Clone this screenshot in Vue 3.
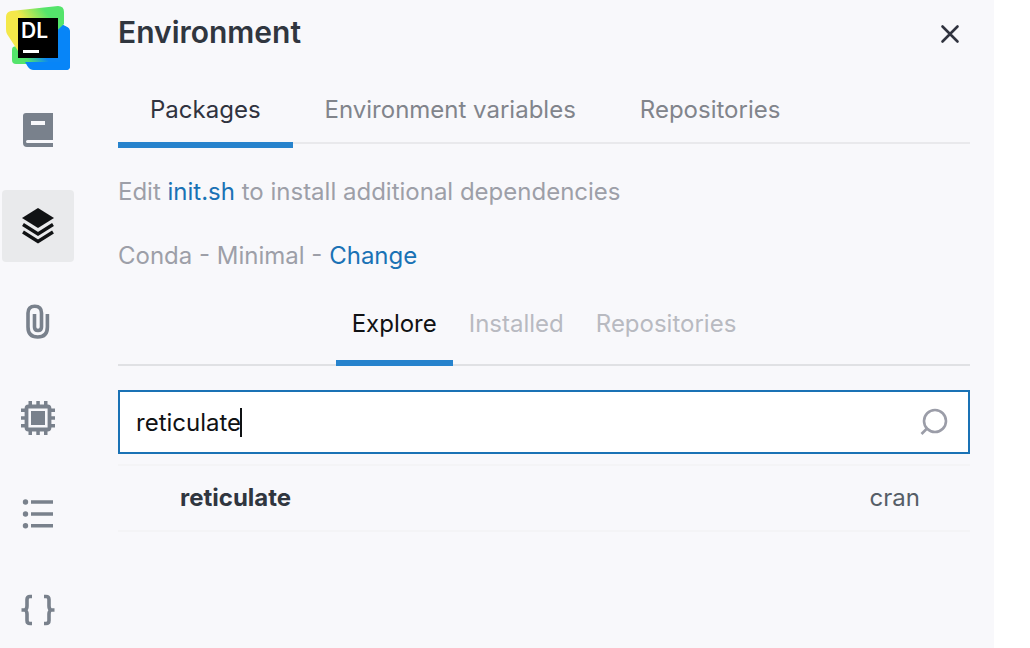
<script setup>
import { ref } from 'vue'

const query = ref('reticulate')
const tabs = ['Packages', 'Environment variables', 'Repositories']
const activeTab = ref('Packages')
const views = ['Explore', 'Installed', 'Repositories']
const activeView = ref('Explore')
const packages = [{ name: 'reticulate', source: 'cran' }]
</script>

<template>
  <div class="app">
    <nav class="sidebar" aria-label="Tools">
      <svg class="logo" viewBox="0 0 64 64" aria-hidden="true">
        <defs>
          <linearGradient id="logo-warm" x1="14" y1="34" x2="50" y2="8" gradientUnits="userSpaceOnUse">
            <stop offset="0.3" stop-color="#f4e84a" />
            <stop offset="0.85" stop-color="#54e46b" />
          </linearGradient>
          <linearGradient id="logo-cool" x1="12" y1="50" x2="34" y2="34" gradientUnits="userSpaceOnUse">
            <stop offset="0.2" stop-color="#4fe06f" />
            <stop offset="0.8" stop-color="#0a86f5" />
          </linearGradient>
        </defs>
        <path d="M10 40l-3 1q-1 1-1 3v10q0 4 4 4h16V38z" fill="#54e46b" />
        <path d="M52 18l9 3q3 1 3 5v34q0 4-4 4H28q-3 0-5-3L14 47z" fill="url(#logo-cool)" />
        <path d="M22 61l-3-5h35V17l7 4q3 2 3 5v34q0 4-4 4H28q-4 0-6-3z" fill="#0785f8" />
        <path d="M5 5L52 0q6 0 6 6v12l-16 15-28 15L1 28q-1-2-1-5V11q0-5 5-6z" fill="url(#logo-warm)" />
        <path d="M12 12h40v40H12z" />
        <path d="M17 44h16v3H17z" fill="#fff" />
        <text x="15" y="32" class="logo-text">DL</text>
      </svg>

      <button class="tool" type="button" aria-label="Notebook">
        <svg viewBox="0 0 48 48">
          <path fill-rule="evenodd" d="M12 7h27v27H13.500q-1.500 0-1.500 1.500T13.500 37H39v4H13q-4 0-4-4V10q0-3 3-3zM17 15v4h14v-4z" />
        </svg>
      </button>
      <button class="tool active" type="button" aria-label="Environment">
        <svg viewBox="0 0 48 48">
          <path d="M24 6l16 10-16 10L8 16z" />
          <path d="M9 22.500l15 9.500 15-9.500M9 30l15 9.500L39 30" fill="none" stroke="currentColor" stroke-width="3.400" />
        </svg>
      </button>
      <button class="tool" type="button" aria-label="Attached files">
        <svg viewBox="0 0 48 48" class="outline">
          <path d="M20.500 16v13q0 3.500 3.500 3.500t3.500-3.500V15q0-6.800-6.700-6.800T14 15v14q0 10 9.700 10T33.400 29V16" />
        </svg>
      </button>
      <button class="tool" type="button" aria-label="Machine">
        <svg viewBox="0 0 48 48">
          <path d="M14.500 7h3.500v5h-3.500zM22.300 7h3.500v5h-3.500zM30 7h3.500v5H30zM14.500 36h3.500v5h-3.500zM22.300 36h3.500v5h-3.500zM30 36h3.500v5H30zM7 14.500h5V18H7zM7 22.300h5v3.500H7zM7 30h5v3.500H7zM36 14.500h5V18h-5zM36 22.300h5v3.500h-5zM36 30h5v3.500h-5z" />
          <rect x="12.500" y="12.500" width="23" height="23" rx="2" fill="none" stroke="currentColor" stroke-width="3.800" />
          <path d="M17 17h14v14H17z" />
        </svg>
      </button>
      <button class="tool" type="button" aria-label="Outline">
        <svg viewBox="0 0 48 48">
          <path d="M17 10.300h22v3.500H17zM17 22.300h22v3.500H17zM17 34h22v3.500H17z" />
          <circle cx="11.500" cy="12" r="2.700" /><circle cx="11.500" cy="24" r="2.700" /><circle cx="11.500" cy="35.700" r="2.700" />
        </svg>
      </button>
      <button class="tool" type="button" aria-label="Variables">
        <svg viewBox="0 0 48 48" class="outline">
          <path d="M18 10.500h-2q-3 0-3 3v6.500q0 3-2 4H7.500H11q2 1 2 4v6.500q0 3 3 3h2M30 10.500h2q3 0 3 3v6.500q0 3 2 4h3.500H37q-2 1-2 4v6.500q0 3-3 3h-2" />
        </svg>
      </button>
    </nav>

    <main class="panel">
      <header class="header">
        <h1>Environment</h1>
        <button class="close" type="button" aria-label="Close">
          <svg viewBox="0 0 20 20"><path d="M2.500 2.500l15 15M17.500 2.500l-15 15" /></svg>
        </button>
      </header>

      <div class="tabs" role="tablist">
        <button
          v-for="tab in tabs" :key="tab" type="button" role="tab"
          :class="['tab', { active: tab === activeTab }]"
          :aria-selected="tab === activeTab"
          @click="activeTab = tab"
        >{{ tab }}</button>
      </div>

      <p class="note">Edit <a href="#init">init.sh</a> to install additional dependencies</p>
      <p class="note">Conda - Minimal - <a href="#change">Change</a></p>

      <div class="views" role="tablist">
        <button
          v-for="view in views" :key="view" type="button" role="tab"
          :class="['view', { active: view === activeView }]"
          :aria-selected="view === activeView"
          @click="activeView = view"
        >{{ view }}</button>
      </div>

      <div class="search">
        <input v-model="query" type="text" aria-label="Search packages" />
        <span class="caret" aria-hidden="true"></span>
        <svg class="lens" viewBox="0 0 28 28" aria-hidden="true">
          <circle cx="15" cy="13" r="11" /><path d="M7.500 20L1.500 26" />
        </svg>
      </div>

      <ul class="results">
        <li v-for="item in packages" :key="item.name">
          <strong>{{ item.name }}</strong>
          <span>{{ item.source }}</span>
        </li>
      </ul>
    </main>
  </div>
</template>

<style>
body {
  margin: 0;
  background: #fff;
}
</style>

<style scoped>
.app {
  box-sizing: border-box;
  display: flex;
  min-height: 100vh;
  margin-right: 36px;
  padding-right: 24px;
  background: #f8f8fb;
  font: 24px/32px Inter, "Liberation Sans", sans-serif;
  color: #30363f;
}
button {
  border: 0;
  padding: 0;
  background: none;
  font: inherit;
  cursor: pointer;
}
.sidebar {
  flex: none;
  display: flex;
  flex-direction: column;
  align-items: center;
  gap: 24px;
  width: 76px;
  box-sizing: border-box;
  padding-top: 6px;
}
.logo {
  width: 64px;
  height: 64px;
}
.logo-text {
  fill: #fff;
  font: 600 21px Inter, sans-serif;
}
.tool {
  display: grid;
  place-items: center;
  width: 72px;
  height: 72px;
  border-radius: 4px;
  color: #79818c;
}
.tool.active {
  background: #e9eaec;
  color: #101214;
}
.tool svg {
  width: 48px;
  height: 48px;
  fill: currentColor;
}
.tool svg.outline {
  fill: none;
  stroke: currentColor;
  stroke-width: 3.6;
}
.panel {
  flex: 1;
  min-width: 0;
  padding: 12px 0 0 42px;
}
.header {
  display: flex;
  align-items: center;
  justify-content: space-between;
  height: 40px;
}
h1 {
  margin: 0;
  font-size: 30px;
  font-weight: 600;
  line-height: 40px;
}
.close {
  display: grid;
  place-items: center;
  width: 40px;
  height: 40px;
  padding-top: 4px;
}
.close svg {
  width: 20px;
  height: 20px;
  fill: none;
  stroke: #30333f;
  stroke-width: 2.6;
  stroke-linecap: round;
}
.tabs {
  display: flex;
  height: 90px;
  border-bottom: 2px solid #e9e9ec;
}
.tab {
  position: relative;
  padding: 26px 32px 0;
  color: #81848b;
}
.tab.active {
  color: #30333f;
}
.tab.active::after,
.view.active::after {
  content: "";
  position: absolute;
  left: 0;
  right: 0;
  bottom: -6px;
  height: 6px;
  background: #2783cd;
}
.note {
  margin: 32px 0 0;
  color: #9d9fa8;
}
.note a {
  color: #1a72b5;
  text-decoration: none;
}
.views {
  display: flex;
  justify-content: center;
  height: 92px;
  border-bottom: 2px solid #e0e1e4;
}
.view {
  position: relative;
  padding: 12px 16px 0;
  color: #b8bac1;
}
.view.active {
  color: #101214;
}
.view.active::after {
  bottom: -2px;
}
.search {
  position: relative;
  display: flex;
  align-items: center;
  box-sizing: border-box;
  height: 64px;
  margin-top: 24px;
  padding: 0 20px 0 16px;
  border: 2px solid #1a72b5;
  background: #fff;
}
input {
  flex: 1;
  min-width: 0;
  border: 0;
  padding: 2px 0 0;
  outline: 0;
  background: none;
  font: inherit;
  color: #101214;
}
.caret {
  position: absolute;
  left: 120px;
  top: 16px;
  width: 2px;
  height: 29px;
  background: #101214;
}
.lens {
  width: 28px;
  height: 28px;
  fill: none;
  stroke: #9b9da8;
  stroke-width: 2.6;
}
.results {
  list-style: none;
  margin: 10px 0 0;
  padding: 0;
  border-top: 2px solid #f4f4f6;
}
.results li {
  display: flex;
  justify-content: space-between;
  padding: 16px 50px 16px 62px;
  border-bottom: 2px solid #f4f4f6;
}
.results span {
  color: #565e67;
}
</style>
